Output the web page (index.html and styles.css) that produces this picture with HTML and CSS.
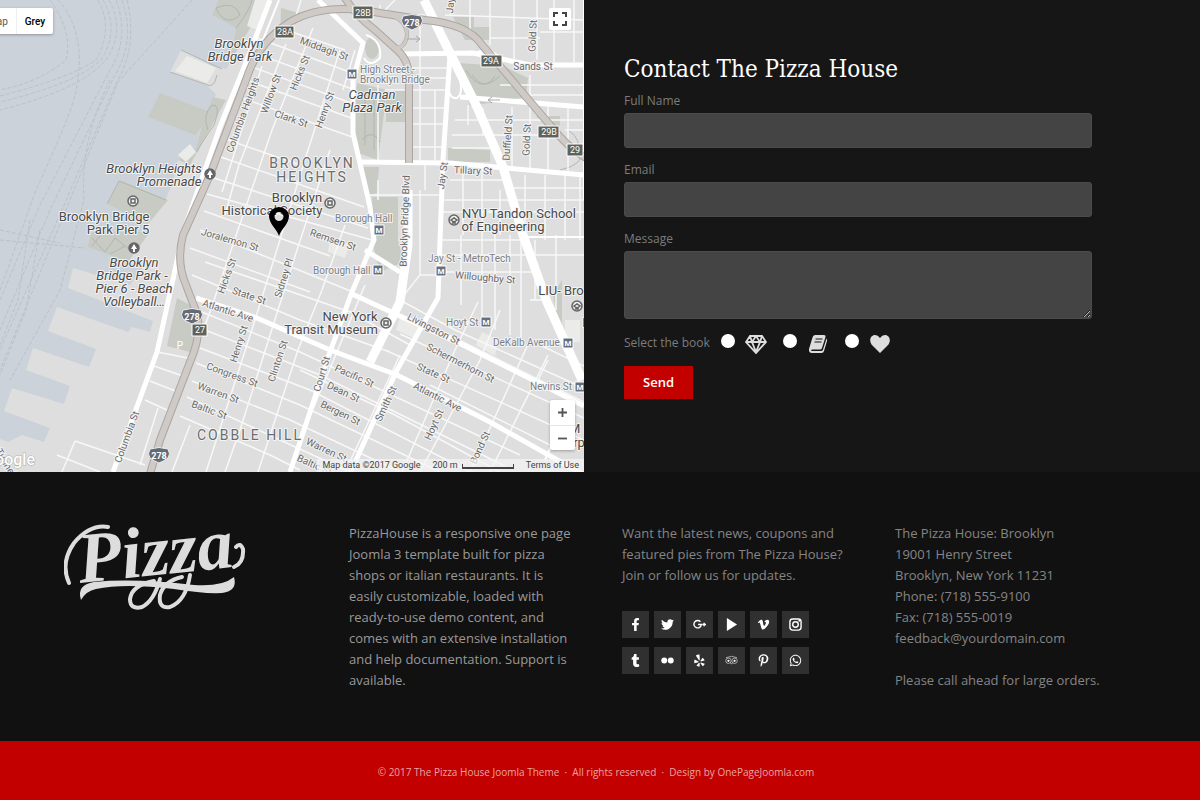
FILE: index.html
```html
<!DOCTYPE html>
<html lang="en">
<head>
  <meta charset="utf-8">
  <title>The Pizza House</title>
  <meta name="viewport" content="width=device-width, initial-scale=1.0">
  <link rel="stylesheet" href="styles.css">
</head>
<body>
  <main class="contact">
    <!-- Map -->
    <section class="map" aria-label="Map">
      <svg class="map-art" viewBox="0 0 584 472" preserveAspectRatio="xMinYMin slice">
        <rect class="water" width="584" height="472"/>

        <!-- Ferry lines -->
        <g class="ferry">
          <path d="M50 0C68 25 70 45 66 60Q40 82 0 90"/>
          <path d="M58 0C82 25 82 65 76 90Q74 108 36 190L0 290"/>
          <path d="M98 0Q114 28 96 60Q70 78 0 96"/>
          <path d="M103 0Q120 30 101 60Q75 84 0 102"/>
          <path d="M109 0Q126 30 106 60Q80 90 0 110"/>
          <path d="M116 0Q130 38 110 70L40 205L0 300"/>
          <path d="M122 0Q136 40 115 75L50 210L0 330"/>
          <path d="M127 0Q138 45 117 82L62 210L0 350"/>
          <path d="M192 0L118 82L70 200L0 370"/>
          <path d="M110 80Q80 140 84 200L60 290L10 380"/>
          <path d="M0 240L85 248M0 230L60 243"/>
          <path d="M30 220L18 300L0 345M40 230L26 310L0 375"/>
        </g>

        <path class="land" d="M218 0L212 15L236 28L226 69L213 66L181 50L170 72L205 84L216 94L207 112L200 130L196 148L178 160L172 185L165 200L120 180L107 204L148 224L146 238L92 234L87 247L128 262L142 268L130 285L73 268L68 288L153 321L150 332L132 327L128 332L57 307L48 331L96 349L89 367L33 348L26 370L70 386L64 404L12 388L4 411L50 428L44 442L22 435L8 442L0 439V472H584V0Z"/>

        <!-- Parks -->
        <g class="park">
          <path d="M218 0H256L250 28L236 52L226 69L232 48L236 28L212 15Z"/>
          <path d="M160 93L213 113L195 135L148 117Z"/>
          <path d="M213 97L226 100L190 165L178 160L196 148L202 125Z"/>
          <path d="M120 180L168 200L148 224L107 204Z"/>
          <path d="M92 232L150 232L128 262L87 247Z"/>
          <path d="M357 83L387 90L378 160L358 153L353 120Z"/>
          <path d="M386 90H406V122H386Z"/>
          <path d="M363 167H379L377 193L370 195Z"/>
          <path d="M372 197H398V240L404 262L380 272L373 245Z"/>
          <path d="M453 17H474V27H490V40H465Z"/>
          <path d="M457 63L503 66L528 78L526 97L470 106Z"/>
          <path d="M448 148L490 150V162H448Z"/>
          <path d="M536 116H560V140Z"/>
          <path d="M177 298L190 305L198 330L190 352L167 346Z"/>
          <path d="M290 15L310 10L300 22ZM281 8L302 14L280 40Z"/>
          <path d="M553 295L562 280V335L556 312Z"/>
          <ellipse cx="372" cy="48" rx="7" ry="11"/>
        </g>
        <g class="park-lines">
          <path d="M216 8Q235 0 240 15Q225 28 216 8ZM236 28Q250 10 252 0M208 130Q202 115 212 105Q222 104 214 125Q200 145 197 152"/>
          <path d="M181 50L222 69M170 72L205 84Q214 90 217 75M119 181L107 204M119 181L166 200"/>
          <path d="M365 95V145M374 95V150M362 140Q372 128 380 142M466 70Q480 95 500 76M472 75Q485 92 495 76M568 130Q584 140 575 155M560 170Q584 165 582 150"/>
          <path d="M92 238L105 252L115 238L130 250M92 246L100 236M110 254L125 246"/>
        </g>
        <path class="bright" d="M187 56L216 68L207 83L175 71ZM178 155L190 144L196 152L186 162ZM255 0H268L258 30L247 26ZM330 238L350 245L345 258L328 252ZM482 332L498 340L495 356L476 345ZM565 320H580V342H565ZM400 318L420 325L414 338L396 330Z"/>

        <!-- Minor streets -->
        <g class="minor">
          <path d="M257 38L355 74M252 52L355 90M249 66L354 104M246 80L354 119M242 98L355 138M228 140L300 165M218 156L364 207M214 178L368 228M207 194L372 240M204 211L330 256M200 230L353 292"/>
          <path d="M262 66L222 192M286 44L239 165L225 215M313 28L272 130L210 312L150 472M340 50L308 150L255 320L206 472M330 150L297 250L240 430L225 472M345 225L322 290L298 350L258 472"/>
          <path d="M192 275L300 320L390 352M205 262L350 312L410 345M190 248L310 292M202 312L300 352L520 455M205 330L320 375L505 466M200 348L310 390L470 472M196 363L300 405L440 472M192 381L290 420L400 472M187 397L280 440L350 472M180 416L270 455L300 470"/>
          <path d="M157 352L188 358M154 366L183 376M150 381L178 392M145 400L167 410M158 408L140 465M190 425L172 472M75 441L145 465M75 441L62 472M57 455L100 472"/>
          <path d="M365 285L300 440L290 472M400 355L345 472M478 302L455 350L402 472M500 310L480 360L420 472M530 340L470 472M548 355L490 472"/>
          <path d="M400 300L455 330L584 388M415 318L584 402M400 334L584 418M385 350L584 440M430 385L560 450M300 370L395 415L500 472"/>
          <path d="M420 190V275L400 300M420 275H440M461 235V305M482 235V320M495 235V330M510 235V335M521 235V338M440 240H520M440 255H584M440 272H535M535 240V300M556 235V310M540 345L584 366M548 360L537 382M530 300L547 300"/>
          <path d="M370 195H440M378 180V200M425 163V190M463 165V235M482 165V235M500 190V235M440 200H584M440 212H584M525 175V225M545 175V240M565 175V240M580 175V240M510 188H584M450 180H505"/>
          <path d="M385 68H450M385 90H450M420 20V160M435 90V160M378 85V162M410 108H445M410 124H445M410 147H445M385 10L395 0M380 5V15M415 15H425M445 15L584 20M470 0V35M490 0V45M514 0V60M537 0V60M554 0V62M574 0V62M490 38H540M540 32H584"/>
          <path d="M455 120H584M452 135H560M452 148H500M468 105V125M483 108V135M512 107V170M530 75V170M548 107V172M568 107V172M500 85H584M530 95H584M565 130H584M420 78H450M343 90L355 50M292 32L345 50M301 0L292 28"/>
        </g>

        <!-- Main roads -->
        <g class="road">
          <path class="wide" d="M424 0L447 47L477 107L503 167L523 235L547 302L582 380"/>
          <path class="wide" d="M408 190V245L400 302L370 362"/>
          <path d="M450 55L443 160L440 240L438 298L397 370L357 458L350 472"/>
          <path d="M318 0L363 43L353 80V133L370 207L374 240L352 292L330 352L290 472"/>
          <path d="M358 162L450 163L584 175M400 54L473 53L530 65H584M460 97L584 107"/>
          <path d="M196 298L257 318L330 350L397 375L490 422L584 475M352 294L463 345L537 382L584 406M365 250L400 272"/>
          <path d="M270 0L247 60L220 127L183 233L175 270L157 352L113 472"/>
          <path class="thin" d="M279 0L250 72L224 140L190 224M520 237H584M584 0V200M545 460L560 425M366 35Q382 40 380 58Q370 68 364 58M470 55Q490 45 500 58M450 70Q445 100 457 98Q466 92 455 65"/>
        </g>

        <!-- Highways -->
        <g class="highway-edge">
          <path d="M150 474L160 440L190 362Q202 335 197 314L186 285Q176 262 183 235L210 175L246 80Q258 42 290 22Q325 2 380 13L425 20Q468 24 482 45L550 125Q568 148 586 158"/>
          <path d="M345 -2Q355 15 375 30L397 50Q409 60 409 78V163"/>
          <path class="ramp" d="M386 13Q408 20 407 36Q405 48 394 49"/>
        </g>
        <g class="highway">
          <path d="M150 474L160 440L190 362Q202 335 197 314L186 285Q176 262 183 235L210 175L246 80Q258 42 290 22Q325 2 380 13L425 20Q468 24 482 45L550 125Q568 148 586 158"/>
          <path d="M345 -2Q355 15 375 30L397 50Q409 60 409 78V163"/>
          <path class="ramp" d="M386 13Q408 20 407 36Q405 48 394 49"/>
        </g>
        <path class="arrow" d="M407 39H419M416 36L420 39L416 42M500 100H488M492 97L488 100L492 103"/>

        <!-- Street names -->
        <g class="street">
          <text transform="translate(323 52) rotate(20)">Middagh St</text>
          <text transform="translate(303 74) rotate(-68)">Hicks St</text>
          <text transform="translate(274 95) rotate(-70)">Willow St</text>
          <text transform="translate(246 116) rotate(-70)">Columbia Heights</text>
          <text transform="translate(328 111) rotate(-70)">Henry St</text>
          <text transform="translate(290 122) rotate(19)">Clark St</text>
          <text transform="translate(454 0) rotate(-86)">Jay St</text>
          <text transform="translate(536 36) rotate(-87)">Gold St</text>
          <text x="533" y="70">Sands St</text>
          <text transform="translate(511 138) rotate(-86)">Duffield St</text>
          <text transform="translate(530 140) rotate(-87)">Gold St</text>
          <text transform="translate(473 174) rotate(2)">Tillary St</text>
          <text transform="translate(446 176) rotate(-82)">Jay St</text>
          <text transform="translate(408 221) rotate(-88)">Brooklyn Bridge Blvd</text>
          <text transform="translate(229 243) rotate(16)">Joralemon St</text>
          <text transform="translate(332 243) rotate(19)">Remsen St</text>
          <text transform="translate(230 277) rotate(-70)">Hicks St</text>
          <text transform="translate(287 279) rotate(-72)">Sidney Pl</text>
          <text transform="translate(248 299) rotate(19)">State St</text>
          <text transform="translate(227 314) rotate(18)">Atlantic Ave</text>
          <text transform="translate(242 345) rotate(-72)">Henry St</text>
          <text transform="translate(281 362) rotate(-72)">Clinton St</text>
          <text transform="translate(231 378) rotate(20)">Congress St</text>
          <text transform="translate(217 396) rotate(20)">Warren St</text>
          <text transform="translate(208 413) rotate(20)">Baltic St</text>
          <text transform="translate(130 438) rotate(-70)">Columbia St</text>
          <text transform="translate(485 281) rotate(5)">Willoughby St</text>
          <text transform="translate(432 332) rotate(27)">Livingston St</text>
          <text transform="translate(459 366) rotate(27)">Schermerhorn St</text>
          <text transform="translate(432 376) rotate(24)">State St</text>
          <text transform="translate(436 400) rotate(27)">Atlantic Ave</text>
          <text transform="translate(353 379) rotate(24)">Pacific St</text>
          <text transform="translate(342 395) rotate(25)">Dean St</text>
          <text transform="translate(339 416) rotate(26)">Bergen St</text>
          <text transform="translate(325 375) rotate(-73)">Court St</text>
          <text transform="translate(389 405) rotate(-65)">Smith St</text>
          <text transform="translate(437 426) rotate(-65)">Hoyt St</text>
          <text transform="translate(483 449) rotate(-65)">Bond St</text>
          <text transform="translate(325 453) rotate(25)">Warren St</text>
          <text transform="translate(313 468) rotate(24)">Baltic St</text>
          <text transform="translate(3 464) rotate(60)">Tunnel</text>
        </g>

        <!-- Stations -->
        <g class="station">
          <text x="360" y="73">High Street -</text>
          <text x="360" y="83">Brooklyn Bridge</text>
          <text x="335" y="222">Borough Hall</text>
          <text x="313" y="274">Borough Hall</text>
          <text x="428" y="262">Jay St - MetroTech</text>
          <text x="446" y="326">Hoyt St</text>
          <text x="493" y="346">DeKalb Avenue</text>
          <text x="530" y="390">Nevins St</text>
        </g>
        <g class="metro">
          <path d="M347 69h10v10h-10zM374 225h10v10h-10zM373 265h10v10h-10zM436 266h10v10h-10zM481 317h10v10h-10zM563 338h10v10h-10zM575 382h10v10h-10z"/>
          <g class="metro-letter">
            <text x="352" y="77">M</text><text x="379" y="233">M</text><text x="378" y="273">M</text>
            <text x="441" y="274">M</text><text x="486" y="325">M</text><text x="568" y="346">M</text><text x="580" y="390">M</text>
          </g>
        </g>

        <!-- Districts and places -->
        <g class="district">
          <text x="312" y="168">BROOKLYN</text>
          <text x="312" y="182">HEIGHTS</text>
          <text x="250" y="440">COBBLE HILL</text>
        </g>
        <g class="place park-name">
          <text x="239" y="48">Brooklyn</text>
          <text x="240" y="61">Bridge Park</text>
          <text x="372" y="99">Cadman</text>
          <text x="372" y="112">Plaza Park</text>
          <text x="154" y="173">Brooklyn Heights</text>
          <text x="169" y="186">Promenade</text>
          <text x="134" y="267">Brooklyn</text>
          <text x="132" y="280">Bridge Park -</text>
          <text x="134" y="293">Pier 6 - Beach</text>
          <text x="134" y="306">Volleyball…</text>
        </g>
        <g class="place">
          <text x="104" y="221">Brooklyn Bridge</text>
          <text x="118" y="234">Park Pier 5</text>
          <text x="297" y="202">Brooklyn</text>
          <text x="272" y="215">Historical Society</text>
          <text x="350" y="321">New York</text>
          <text x="331" y="334">Transit Museum</text>
          <text x="519" y="218">NYU Tandon School</text>
          <text x="503" y="231">of Engineering</text>
          <text x="561" y="295">LIU- Bro</text>
          <text x="586" y="327">E</text>
          <text x="580" y="433">M F</text>
          <text x="579" y="447">rp</text>
        </g>
        <g class="poi">
          <g class="poi-dark">
            <circle cx="210" cy="174" r="5"/><circle cx="134" cy="248" r="5"/>
          </g>
          <path class="tree" d="M210 170l3 5h-2v3h-2v-3h-2zM134 244l3 5h-2v3h-2v-3h-2z"/>
          <circle cx="133" cy="201" r="5"/><circle cx="330" cy="203" r="5"/><circle cx="386" cy="323" r="5"/>
          <circle cx="454" cy="220" r="5"/><circle cx="577" cy="306" r="5"/>
          <path d="M131 203v-4h4v4zM328 201h4v4h-4zM384 321h4v4h-4zM451 220l3-2 3 2-3 2zM452 223h4M574 306l3-2 3 2-3 2zM575 309h4"/>
        </g>

        <!-- Exits and route shields -->
        <g class="exit">
          <path d="M275 26h19v12h-19zM353 6h20v13h-20zM481 55h21v12h-21zM538 126h21v12h-21zM567 144h16v12h-16zM192 324h15v12h-15z"/>
          <text x="285" y="35">28A</text><text x="363" y="16">28B</text><text x="491" y="64">29A</text>
          <text x="549" y="135">29B</text><text x="575" y="153">29</text><text x="200" y="333">27</text>
        </g>
        <g class="shield">
          <path d="M-9 -6Q0 -9 9 -6Q12 -1 9 3Q5 6 0 8Q-5 6 -9 3Q-12 -1 -9 -6Z" transform="translate(412 22)"/>
          <path d="M-9 -6Q0 -9 9 -6Q12 -1 9 3Q5 6 0 8Q-5 6 -9 3Q-12 -1 -9 -6Z" transform="translate(192 316)"/>
          <path d="M-9 -6Q0 -9 9 -6Q12 -1 9 3Q5 6 0 8Q-5 6 -9 3Q-12 -1 -9 -6Z" transform="translate(159 455)"/>
          <text x="412" y="26">278</text><text x="192" y="320">278</text><text x="159" y="459">278</text>
        </g>
        <text class="parking" x="180" y="349">P</text>

        <!-- Marker -->
        <path class="marker" fill-rule="evenodd" d="M279 236C277 229 269 224 269 216A10 9 0 0 1 289 216C289 224 281 229 279 236ZM279 212A4 4 0 1 0 279 221A4 4 0 1 0 279 212Z"/>
        <text class="brand" x="35" y="465">Google</text>
      </svg>

      <div class="map-type">
        <button type="button">Map</button>
        <button type="button" class="active">Grey</button>
      </div>
      <button type="button" class="map-full" aria-label="Full screen">
        <svg viewBox="0 0 14 14"><path d="M1 5V1h4M9 1h4v4M13 9v4H9M5 13H1V9"/></svg>
      </button>
      <div class="map-zoom">
        <button type="button" aria-label="Zoom in"><svg viewBox="0 0 10 10"><path d="M0 5h10M5 0v10"/></svg></button>
        <button type="button" aria-label="Zoom out"><svg viewBox="0 0 10 10"><path d="M0 5h10"/></svg></button>
      </div>
      <div class="map-legal">
        <span>Map data ©2017 Google</span>
        <span class="scale">200 m <i></i></span>
        <a href="#">Terms of Use</a>
      </div>
    </section>

    <!-- Contact form -->
    <section class="contact-box">
      <h2>Contact The Pizza House</h2>
      <form class="contact-form">
        <div class="field">
          <label for="name">Full Name</label>
          <input type="text" id="name">
        </div>
        <div class="field">
          <label for="email">Email</label>
          <input type="email" id="email">
        </div>
        <div class="field">
          <label for="message">Message</label>
          <textarea id="message"></textarea>
        </div>
        <div class="choices" role="radiogroup" aria-labelledby="book">
          <span class="choices-title" id="book">Select the book</span>
          <label class="choice">
            <input type="radio" name="book" value="diamond" aria-label="Diamond">
            <svg viewBox="0 0 22 20"><path class="line" d="M5 2H17L21 8L11 19L1 8ZM1 8H21M7 8L11 18L15 8L11 2L7 8L5 2M15 8L17 2"/></svg>
          </label>
          <label class="choice">
            <input type="radio" name="book" value="book" aria-label="Book">
            <svg viewBox="0 0 22 20"><path d="M8 1H17Q19 1 18.500 3L15 14Q14.500 15.500 13 15.500H5Q3.500 16 4.500 17H14Q15.500 17 16 15.500L19.500 4.500Q20.500 5.500 20 7L17 17Q16.500 19 14.500 19H5Q1.500 19 2 15L5.500 3.500Q6 1 8 1Z"/><path class="cut" d="M8.500 5H15.500M7.500 8H14.500"/></svg>
          </label>
          <label class="choice">
            <input type="radio" name="book" value="heart" aria-label="Heart">
            <svg viewBox="0 0 22 20"><path d="M11 19L2.500 10.500C-.5 6 2 1 6 1Q9 1 11 4Q13 1 16 1C20 1 22.500 6 19.500 10.500Z"/></svg>
          </label>
        </div>
        <button type="submit" class="send">Send</button>
      </form>
    </section>
  </main>

  <footer>
    <div class="footer-cols">
      <a href="#" class="logo" aria-label="Pizza">
        <svg viewBox="0 0 182 88">
          <text x="16" y="60" transform="rotate(-6 16 60)">Pizza</text>
          <path class="stroke" d="M5 60Q-4 40 10 20Q26 1 44 4M170 44Q180 40 179 26Q176 19 172 24"/>
          <path class="stroke" d="M90 58Q68 62 66 76Q66 87 78 84Q90 78 96 56M118 54Q100 58 96 72Q94 86 106 84Q122 78 126 52"/>
          <path d="M17 77Q12 62 30 59Q70 55 130 62Q158 64 170 54Q174 68 158 70Q140 71 110 66Q60 60 32 66Q22 68 17 77Z"/>
        </svg>
      </a>
      <p class="about">PizzaHouse is a responsive one page Joomla 3 template built for pizza shops or italian restaurants. It is easily customizable, loaded with ready-to-use demo content, and comes with an extensive installation and help documentation. Support is available.</p>
      <div>
        <p>Want the latest news, coupons and featured pies from The Pizza House? Join or follow us for updates.</p>
        <div class="social">
          <a href="#" aria-label="Facebook"><svg viewBox="0 0 320 512"><path d="M279.140 288l14.220-92.660h-88.910v-60.130c0-25.350 12.420-50.060 52.240-50.060h40.420V6.260S260.430 0 225.360 0c-73.220 0-121.080 44.380-121.080 124.720v70.620H22.890V288h81.390v224h100.170V288z"/></svg></a>
          <a href="#" aria-label="Twitter"><svg viewBox="0 0 512 512"><path d="M459.370 151.716c.325 4.548.325 9.097.325 13.645 0 138.720-105.583 298.558-298.558 298.558-59.452 0-114.680-17.219-161.137-47.106 8.447.974 16.568 1.299 25.340 1.299 49.055 0 94.213-16.568 130.274-44.832-46.132-.975-84.792-31.188-98.112-72.772 6.498.974 12.995 1.624 19.818 1.624 9.421 0 18.843-1.300 27.614-3.573-48.081-9.747-84.143-51.980-84.143-102.985v-1.299c13.969 7.797 30.214 12.670 47.431 13.319-28.264-18.843-46.781-51.005-46.781-87.391 0-19.492 5.197-37.360 14.294-52.954 51.655 63.675 129.300 105.258 216.365 109.807-1.624-7.797-2.599-15.918-2.599-24.040 0-57.828 46.782-104.934 104.934-104.934 30.213 0 57.502 12.670 76.670 33.137 23.715-4.548 46.456-13.320 66.599-25.340-7.798 24.366-24.366 44.833-46.132 57.827 21.117-2.273 41.584-8.122 60.426-16.243-14.292 20.791-32.161 39.308-52.628 54.253z"/></svg></a>
          <a href="#" aria-label="Google Plus"><svg viewBox="0 0 14 14"><path class="line" d="M8 4A4 4 0 1 0 9 7H5.500M10 7H14M12 5V9"/></svg></a>
          <a href="#" aria-label="Play"><svg viewBox="0 0 14 14"><path d="M2 0L13 7L2 14Z"/></svg></a>
          <a href="#" aria-label="Vimeo"><svg viewBox="0 0 448 512"><path d="M447.800 153.600c-2 43.600-32.400 103.300-91.400 179.100-60.900 79.200-112.400 118.800-154.600 118.800-26.100 0-48.200-24.100-66.300-72.300C100.300 250 85.300 174.300 56.200 174.300c-3.400 0-15.100 7.100-35.200 21.100L0 168.200c51.600-45.300 100.900-95.700 131.800-98.500 34.900-3.400 56.300 20.500 64.400 71.500 28.700 181.500 41.400 208.900 93.600 126.700 18.700-29.600 28.800-52.100 30.200-67.600 4.800-45.900-35.800-42.800-63.300-31 22-72.100 64.100-107.100 126.200-105.100 45.800 1.200 67.500 31.100 64.900 89.400z"/></svg></a>
          <a href="#" aria-label="Instagram"><svg viewBox="0 0 14 14"><rect class="line" x="1" y="1" width="12" height="12" rx="3"/><circle class="line" cx="7" cy="7" r="3"/><circle cx="11" cy="3" r="1"/></svg></a>
          <a href="#" aria-label="Tumblr"><svg viewBox="0 0 320 512"><path d="M309.800 480.300c-13.600 14.500-50 31.700-97.400 31.700-120.800 0-147-88.800-147-140.600v-144H17.900c-5.500 0-10-4.500-10-10v-68c0-7.200 4.500-13.600 11.300-16 62-21.800 81.500-76 84.300-117.100.8-11 6.500-16.300 16.100-16.300h70.900c5.500 0 10 4.500 10 10v115.200h83c5.500 0 10 4.400 10 9.900v81.700c0 5.500-4.500 10-10 10h-83.400V360c0 34.200 23.700 53.600 68 35.800 4.800-1.900 9-3.200 12.700-2.200 3.500.9 5.800 3.400 7.400 7.900l22 64.300c1.800 5 3.300 10.600-.4 14.500z"/></svg></a>
          <a href="#" aria-label="Flickr"><svg viewBox="0 0 14 14"><circle cx="3.500" cy="7" r="3.200"/><circle cx="10.500" cy="7" r="3.200"/></svg></a>
          <a href="#" aria-label="Yelp"><svg viewBox="0 0 14 14"><path d="M3 1.500Q5 .3 7 .5L7.300 6.500L6.500 7ZM1.700 6L6 8L5.800 9L1.500 10Q1 8 1.700 6ZM6.500 9.500L7.300 10L7 13.700Q5 13.500 3.700 12.500ZM8.300 9.200L12.700 10.500Q12 12.500 10.500 13.300L8 10ZM8 7.300L10.300 4Q12 5 12.500 7L8.300 8.200Z"/></svg></a>
          <a href="#" aria-label="TripAdvisor"><svg viewBox="0 0 14 14"><path class="fine" d="M1 4Q7 1 13 4M5.700 9L7 11L8.300 9"/><circle class="fine" cx="3.700" cy="7.300" r="2.900"/><circle class="fine" cx="10.300" cy="7.300" r="2.900"/><circle cx="3.700" cy="7.300" r="1.200"/><circle cx="10.300" cy="7.300" r="1.200"/></svg></a>
          <a href="#" aria-label="Pinterest"><svg viewBox="0 0 384 512"><path d="M204 6.500C101.400 6.500 0 74.900 0 185.600 0 256 39.600 296 63.600 296c9.900 0 15.600-27.600 15.600-35.400 0-9.300-23.700-29.100-23.700-67.800 0-80.400 61.200-137.400 140.400-137.400 68.100 0 118.500 38.700 118.500 109.800 0 53.100-21.300 152.700-90.300 152.700-24.900 0-46.200-18-46.200-43.800 0-37.800 26.400-74.400 26.400-113.400 0-66.200-93.900-54.200-93.900 25.800 0 16.800 2.100 35.400 9.600 50.700-13.800 59.400-42 147.900-42 209.100 0 18.900 2.700 37.500 4.500 56.400 3.400 3.800 1.700 3.400 6.900 1.500 50.400-69 48.600-82.500 71.400-172.800 12.300 23.400 44.100 36 69.300 36 106.200 0 153.900-103.500 153.900-196.800C384 71.300 298.200 6.500 204 6.500z"/></svg></a>
          <a href="#" aria-label="WhatsApp"><svg viewBox="0 0 448 512"><path d="M380.900 97.100C339 55.100 283.200 32 223.900 32c-122.400 0-222 99.600-222 222 0 39.100 10.200 77.300 29.600 111L0 480l117.700-30.900c32.400 17.700 68.900 27 106.100 27h.1c122.300 0 224.100-99.600 224.100-222 0-59.300-25.200-115-67.100-157zm-157 341.600c-33.200 0-65.700-8.900-94-25.700l-6.700-4-69.800 18.300L72 359.200l-4.400-7c-18.500-29.400-28.200-63.300-28.200-98.200 0-101.700 82.800-184.500 184.600-184.500 49.300 0 95.600 19.200 130.400 54.100 34.800 34.900 56.200 81.200 56.100 130.500 0 101.800-84.900 184.600-186.600 184.600zm101.200-138.200c-5.500-2.800-32.800-16.200-37.900-18-5.100-1.900-8.800-2.800-12.500 2.800-3.700 5.600-14.300 18-17.600 21.800-3.200 3.700-6.500 4.200-12 1.400-32.600-16.300-54-29.100-75.500-66-5.700-9.800 5.700-9.100 16.300-30.300 1.800-3.700.9-6.900-.5-9.700-1.400-2.800-12.500-30.100-17.100-41.200-4.500-10.800-9.100-9.300-12.500-9.500-3.200-.2-6.900-.2-10.600-.2-3.700 0-9.700 1.400-14.800 6.900-5.100 5.600-19.400 19-19.400 46.300 0 27.300 19.900 53.700 22.600 57.400 2.800 3.700 39.100 59.700 94.800 83.800 35.200 15.200 49 16.500 66.600 13.900 10.700-1.600 32.800-13.400 37.400-26.400 4.600-13 4.600-24.100 3.200-26.400-1.300-2.500-5-3.900-10.500-6.600z"/></svg></a>
        </div>
      </div>
      <address>
        The Pizza House: Brooklyn<br>
        19001 Henry Street<br>
        Brooklyn, New York 11231<br>
        Phone: (718) 555-9100<br>
        Fax: (718) 555-0019<br>
        <a href="#">feedback@yourdomain.com</a><br>
        <br>
        Please call ahead for large orders.
      </address>
    </div>
    <div class="copyright">© 2017 The Pizza House Joomla Theme &nbsp;·&nbsp; All rights reserved &nbsp;·&nbsp; Design by <a href="#">OnePageJoomla.com</a></div>
  </footer>
</body>
</html>
```

FILE: styles.css
```css
* {
  box-sizing: border-box;
}
body {
  margin: 0;
  background-color: #111;
  color: #858585;
  font-family: "Open Sans", sans-serif;
  font-size: 13px;
  line-height: 21px;
}
a {
  color: inherit;
  text-decoration: none;
}
button {
  border: none;
  cursor: pointer;
}
p {
  margin: 0;
}

/* map */
.contact {
  display: grid;
  grid-template-columns: 584fr 616fr;
  background-color: #161616;
}
.map {
  position: relative;
  overflow: hidden;
  font-family: Roboto, sans-serif;
}
.map-art {
  display: block;
  width: 100%;
  height: 100%;
}
.water {
  fill: #ccd2da;
}
.ferry {
  fill: none;
  stroke: #bbc1ca;
  stroke-width: 1;
  stroke-dasharray: 4 2;
}
.land {
  fill: #dedede;
}
.park {
  fill: #c8cbc4;
}
.park-lines {
  fill: none;
  stroke: #b3b6b0;
}
.bright {
  fill: #ebebe9;
}
.minor {
  fill: none;
  stroke: #f8f8f8;
  stroke-width: 1.500;
}
.road {
  fill: none;
  stroke: #fff;
  stroke-width: 5;
}
.road .wide {
  stroke-width: 9;
}
.road .thin {
  stroke-width: 2;
}
.highway-edge {
  fill: none;
  stroke: #aaa6a2;
  stroke-width: 8;
}
.highway {
  fill: none;
  stroke: #cfcac6;
  stroke-width: 6;
}
.highway-edge .ramp {
  stroke-width: 4;
}
.highway .ramp {
  stroke-width: 3;
}
.arrow {
  fill: none;
  stroke: #a3a8b0;
}
.map-art text {
  paint-order: stroke;
  stroke: #f4f4f4;
  stroke-width: 2px;
  stroke-linejoin: round;
}
.street {
  font-size: 10px;
  fill: #686868;
  text-anchor: middle;
}
.station {
  font-size: 10px;
  fill: #7b7f85;
}
.metro path {
  fill: #637081;
  stroke: #fff;
}
.map-art .metro-letter text {
  font-size: 8px;
  font-weight: bold;
  fill: #fff;
  stroke: none;
  text-anchor: middle;
}
.district {
  font-size: 14px;
  letter-spacing: 2px;
  fill: #6c6c6c;
  text-anchor: middle;
}
.place {
  font-size: 13px;
  fill: #4a4a4a;
  text-anchor: middle;
}
.park-name {
  font-style: italic;
}
.poi {
  fill: #eee;
  stroke: #666;
  stroke-width: 1.500;
}
.poi-dark {
  fill: #666;
}
.poi .tree {
  fill: #fff;
  stroke: none;
}
.exit path {
  fill: #5d625b;
  stroke: #fff;
}
.shield path {
  fill: #646b76;
  stroke: #eee;
}
.map-art .exit text,
.map-art .shield text {
  font-size: 9px;
  fill: #fff;
  stroke: none;
  text-anchor: middle;
}
.map-art .shield text {
  font-weight: bold;
}
.map-art .parking {
  font-size: 10px;
  fill: #fff;
  stroke: none;
  text-anchor: middle;
}
.marker {
  fill: #000;
}
.map-art .brand {
  font-size: 16px;
  font-weight: 500;
  fill: #fff;
  stroke: #aaa;
  stroke-width: 1px;
  text-anchor: end;
}

/* map controls */
.map-type,
.map-full,
.map-zoom {
  position: absolute;
  background-color: #fff;
  border-radius: 2px;
}
.map-type,
.map-zoom {
  box-shadow: 0 1px 3px rgba(0, 0, 0, .3);
}
.map-type {
  top: 8px;
  left: -20px;
  display: flex;
}
.map-type button {
  height: 26px;
  padding: 0 8px;
  background: none;
  color: #565656;
  font: 10px Roboto, sans-serif;
}
.map-type .active {
  border-left: 1px solid #eee;
  color: #000;
  font-weight: 500;
}
.map-full {
  top: 8px;
  right: 13px;
  padding: 4px;
}
.map-full svg {
  display: block;
  width: 14px;
  height: 14px;
  fill: none;
  stroke: #444;
  stroke-width: 2;
}
.map-zoom {
  right: 9px;
  bottom: 22px;
  display: grid;
}
.map-zoom button {
  width: 25px;
  height: 25px;
  padding: 8px;
  background: none;
}
.map-zoom button + button {
  border-top: 1px solid #e6e6e6;
}
.map-zoom svg {
  display: block;
  width: 9px;
  height: 9px;
  stroke: #555;
  stroke-width: 2;
}
.map-legal {
  position: absolute;
  right: 0;
  bottom: 0;
  display: flex;
  gap: 12px;
  padding: 0 5px;
  background-color: rgba(245, 245, 245, .7);
  color: #444;
  font-size: 9px;
  line-height: 13px;
}
.scale {
  display: flex;
  gap: 4px;
}
.scale i {
  width: 52px;
  height: 5px;
  margin-top: 5px;
  border: 1px solid #444;
  border-top: none;
  border-bottom-width: 2px;
}

/* contact form */
.contact-box {
  padding: 54px 40px 73px;
}
.contact-box h2 {
  margin: 0 0 8px;
  color: #fff;
  font: 24px/30px "Roboto Slab", "DejaVu Serif Condensed", "DejaVu Serif", serif;
}
.contact-form {
  max-width: 468px;
  font-size: 12px;
  line-height: 18px;
  color: #7c7c7c;
}
.field {
  display: grid;
  gap: 3px;
  margin-bottom: 13px;
}
.field input,
.field textarea {
  width: 100%;
  height: 35px;
  padding: 8px;
  border: 1px solid #4b4b4b;
  border-radius: 3px;
  background-color: #444;
  color: #fff;
  font: inherit;
}
.field textarea {
  height: 68px;
}
.choices {
  display: flex;
  align-items: center;
  gap: 16px;
  height: 22px;
  margin-bottom: 12px;
}
.choices-title {
  margin-right: -5px;
}
.choice {
  display: flex;
  gap: 10px;
}
.choice input {
  appearance: none;
  width: 14px;
  height: 14px;
  margin: 2px 0 0;
  border-radius: 50%;
  background-color: #fff;
}
.choice input:checked {
  border: 4px solid #fff;
  background-color: #c20000;
}
.choice svg {
  width: 22px;
  height: 20px;
  margin-top: 2px;
  fill: #ddd;
}
.choice .line {
  fill: none;
  stroke: #ddd;
  stroke-width: 1.800;
}
.choice .cut {
  stroke: #161616;
  stroke-width: 1.200;
}
.send {
  display: block;
  padding: 6px 19px;
  background-color: #c20000;
  color: #fff;
  font: 600 13px/21px "Open Sans", sans-serif;
}

/* footer */
.footer-cols {
  display: grid;
  grid-template-columns: 240fr 228fr 228fr 228fr;
  gap: 45px;
  padding: 51px 77px 50px 64px;
}
.logo svg {
  display: block;
  width: 182px;
  height: 88px;
  fill: #ddd;
}
.logo text {
  font: italic bold 72px "Liberation Serif", serif;
}
.logo .stroke {
  fill: none;
  stroke: #ddd;
  stroke-width: 4;
  stroke-linecap: round;
}
.about {
  color: #999;
}
.social {
  display: grid;
  grid-template-columns: repeat(6, 27px);
  gap: 9px 5px;
  margin-top: 25px;
}
.social a {
  display: grid;
  place-items: center;
  height: 27px;
  background-color: #303030;
}
.social svg {
  width: 13px;
  height: 13px;
  fill: #fff;
}
.social .line {
  fill: none;
  stroke: #fff;
  stroke-width: 1.500;
}
.social .fine {
  fill: none;
  stroke: #ccc;
  stroke-width: .8;
}
address {
  font-style: normal;
}
.copyright {
  padding: 21px 28px 17px 20px;
  background-color: #c20000;
  color: #eba3a3;
  font-size: 10px;
  text-align: center;
}
```
